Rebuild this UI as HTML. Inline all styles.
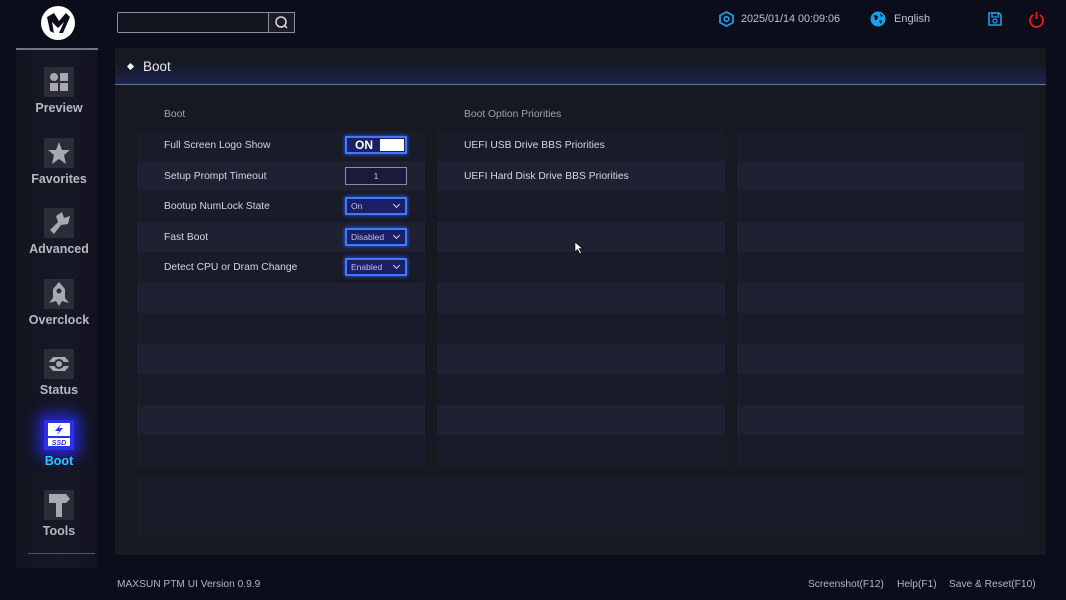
<!DOCTYPE html>
<html><head><meta charset="utf-8"><style>
*{margin:0;padding:0;box-sizing:border-box}
body{width:1066px;height:600px;background:#0b0d1b;font-family:"Liberation Sans",sans-serif;position:relative;overflow:hidden;color:#d0d2dc}
.abs{position:absolute}
.side{left:16px;top:48px;width:82px;height:520px;background:linear-gradient(90deg,#121420,#161825 60%,#12131f)}
.nav{position:absolute;left:16px;width:86px;text-align:center;font-weight:bold;font-size:12.5px;color:#b8b9c0}
.ico{position:absolute;left:44px;width:30px;height:30px;background:#2a2c38}
.main{left:115px;top:48px;width:931px;height:507px;background:#161822}
.hdr{left:115px;top:48px;width:931px;height:37px;background:linear-gradient(180deg,#161822 40%,#1d2550);border-bottom:1px solid #6a7090}
.col{position:absolute;top:130px;width:288px}
.r{height:30.5px;background:#1a1b29;font-size:10.3px;color:#d4d6de;line-height:31px;padding-left:27px;position:relative}
.r.l{background:#1f2132}
.ctl{position:absolute;left:208px;top:6px;width:62px;height:18px;border:2px solid #3a7cff;background:#1c1f66;box-shadow:0 0 4px #2f5fff;font-size:8.5px;color:#bfc4ea;line-height:14px;padding-left:4px}
.ctl i{position:absolute;right:6px;top:3px;width:5px;height:5px;border-right:1.5px solid #ddd;border-bottom:1.5px solid #ddd;transform:rotate(45deg)}
.ft{font-size:10.2px;color:#b4b6c0;top:579px}
</style></head><body>
<svg class="abs" style="left:40px;top:5px" width="36" height="36" viewBox="0 0 36 36"><circle cx="18" cy="18" r="17" fill="#fff"/><path d="M7 12 L14 8 L19 16 L26 8 L30 12 L23 28 L19 28 L24 17 L18 23 L12 17 L14 28 L10 26 Z" fill="#0b0d1b"/></svg>
<div class="abs side"></div>
<div class="abs" style="left:16px;top:48px;width:82px;height:1.5px;background:#707487"></div>
<div class="abs" style="left:28px;top:553px;width:67px;height:1px;background:#505468"></div>

<div class="ico" style="top:67px"><svg width="30" height="30"><circle cx="10" cy="10" r="4" fill="#a8a9b0"/><rect x="16" y="6" width="8" height="8" fill="#a8a9b0"/><rect x="6" y="16" width="8" height="8" fill="#a8a9b0"/><rect x="16" y="16" width="8" height="8" fill="#a8a9b0"/></svg></div>
<div class="nav" style="top:101px">Preview</div>
<div class="ico" style="top:138px"><svg width="30" height="30"><path d="M15 4 L18 12 L26 12 L20 17 L22 26 L15 21 L8 26 L10 17 L4 12 L12 12Z" fill="#a8a9b0"/></svg></div>
<div class="nav" style="top:172px">Favorites</div>
<div class="ico" style="top:208px"><svg width="30" height="30"><path d="M6 22 L14 14 L12 8 L18 4 L20 10 L26 8 L24 16 L17 17 L10 26Z" fill="#a8a9b0"/></svg></div>
<div class="nav" style="top:242px">Advanced</div>
<div class="ico" style="top:279px"><svg width="30" height="30"><path d="M15 3 L21 10 L21 19 L25 24 L18 22 L15 27 L12 22 L5 24 L9 19 L9 10Z" fill="#a8a9b0"/><circle cx="15" cy="12" r="2.5" fill="#2a2c38"/></svg></div>
<div class="nav" style="top:313px">Overclock</div>
<div class="ico" style="top:349px"><svg width="30" height="30"><path d="M3 15 L9 8 L21 8 L27 15 L21 22 L9 22Z" fill="#a8a9b0"/><rect x="3" y="13" width="24" height="4" fill="#2a2c38"/><circle cx="15" cy="15" r="5" fill="#2a2c38"/><circle cx="15" cy="15" r="3" fill="#a8a9b0"/></svg></div>
<div class="nav" style="top:383px">Status</div>
<div class="ico" style="top:420px;background:#2c30e8;box-shadow:0 0 14px 6px #2525d0"><svg width="30" height="30"><rect x="4" y="3" width="22" height="13" fill="#fff"/><path d="M17 4 L11 11 L15 11 L13 15 L19 8 L15 8Z" fill="#2c30e8"/><rect x="4" y="18" width="22" height="8" fill="#fff"/><text x="15" y="25" font-size="7" font-weight="bold" font-style="italic" text-anchor="middle" fill="#2c30e8" font-family="Liberation Sans">SSD</text></svg></div>
<div class="nav" style="top:454px;color:#27c9ff">Boot</div>
<div class="ico" style="top:490px"><svg width="30" height="30"><path d="M5 4 L22 4 L26 9 L22 13 L18 13 L18 27 L12 27 L12 13 L5 13Z" fill="#a8a9b0"/></svg></div>
<div class="nav" style="top:524px">Tools</div>

<div class="abs" style="left:117px;top:12px;width:178px;height:21px;border:1px solid #8a8d9a;border-radius:2px;background:#12141f"></div>
<div class="abs" style="left:268px;top:12px;width:27px;height:21px;border:1px solid #8a8d9a;background:#1a1c28"><svg width="25" height="19"><circle cx="12" cy="9" r="5" stroke="#ddd" stroke-width="1.5" fill="none"/><line x1="15.5" y1="12.5" x2="18" y2="15" stroke="#ddd" stroke-width="1.5"/></svg></div>

<svg class="abs" style="left:719px;top:11px" width="15" height="16"><path d="M7.5 1 L14 4.5 L14 11.5 L7.5 15 L1 11.5 L1 4.5Z" fill="none" stroke="#18a0e8" stroke-width="1.8"/><circle cx="7.5" cy="8" r="2.3" fill="none" stroke="#18a0e8" stroke-width="1.6"/></svg>
<div class="abs" style="left:741px;top:13px;font-size:10.8px;color:#c0c2cc">2025/01/14 00:09:06</div>
<svg class="abs" style="left:870px;top:11px" width="16" height="16"><circle cx="8" cy="8" r="7.5" fill="#18a0e8"/><path d="M4 4 L8 5 L7 9 L5 9Z M9 10 L12 9 L11 13Z M10 2 L13 5 L11 6Z" fill="#0b0d1b"/></svg>
<div class="abs" style="left:894px;top:13px;font-size:11px;color:#c0c2cc">English</div>
<svg class="abs" style="left:988px;top:12px" width="14" height="14"><path d="M1 1 L11 1 L13 3 L13 13 L1 13Z" fill="none" stroke="#18a0e8" stroke-width="1.6"/><rect x="4" y="1" width="6" height="4" fill="none" stroke="#18a0e8" stroke-width="1.3"/><circle cx="7" cy="9" r="2" fill="none" stroke="#18a0e8" stroke-width="1.3"/></svg>
<svg class="abs" style="left:1028px;top:11px" width="17" height="17"><path d="M5 4 A6.5 6.5 0 1 0 12 4" fill="none" stroke="#f01818" stroke-width="1.8"/><line x1="8.5" y1="1" x2="8.5" y2="8" stroke="#f01818" stroke-width="1.8"/></svg>

<div class="abs main"></div>
<div class="abs hdr"></div>
<div class="abs" style="left:128px;top:64px;width:5px;height:5px;background:#fff;transform:rotate(45deg)"></div>
<div class="abs" style="left:143px;top:59px;font-size:13.5px;color:#e8e9ee">Boot</div>

<div class="abs" style="left:164px;top:109px;font-size:10.3px;color:#a0a2ae">Boot</div>
<div class="abs" style="left:464px;top:109px;font-size:10.3px;color:#a0a2ae">Boot Option Priorities</div>

<div class="col" style="left:137px">
<div class="r">Full Screen Logo Show<div class="ctl" style="padding:0;background:#1c1f66"><span style="position:absolute;left:8px;top:0;font-size:12px;font-weight:bold;color:#fff;line-height:14px">ON</span><span style="position:absolute;right:1px;top:1px;width:24px;height:12px;background:#fff"></span></div></div>
<div class="r l">Setup Prompt Timeout<div class="ctl" style="border:1px solid #8a8ea8;background:#1a1b3c;box-shadow:none;text-align:center;padding:0;line-height:16px">1</div></div>
<div class="r">Bootup NumLock State<div class="ctl">On<i></i></div></div>
<div class="r l">Fast Boot<div class="ctl">Disabled<i></i></div></div>
<div class="r">Detect CPU or Dram Change<div class="ctl">Enabled<i></i></div></div>
<div class="r l"></div><div class="r"></div><div class="r l"></div><div class="r"></div><div class="r l"></div><div class="r"></div>
</div>
<div class="col" style="left:437px">
<div class="r">UEFI USB Drive BBS Priorities</div>
<div class="r l">UEFI Hard Disk Drive BBS Priorities</div>
<div class="r"></div><div class="r l"></div><div class="r"></div><div class="r l"></div><div class="r"></div><div class="r l"></div><div class="r"></div><div class="r l"></div><div class="r"></div>
</div>
<div class="col" style="left:737px;width:287px">
<div class="r"></div><div class="r l"></div><div class="r"></div><div class="r l"></div><div class="r"></div><div class="r l"></div><div class="r"></div><div class="r l"></div><div class="r"></div><div class="r l"></div><div class="r"></div>
</div>
<div class="abs" style="left:137px;top:477px;width:887px;height:60px;background:#1a1b29"></div>

<svg class="abs" style="left:574px;top:241px" width="10" height="14"><path d="M1 1 L1 11 L3.5 8.5 L6 13 L7.5 12 L5 7.5 L8.5 7.5Z" fill="#fff" stroke="#000" stroke-width=".6"/></svg>

<div class="abs ft" style="left:117px">MAXSUN PTM UI Version 0.9.9</div>
<div class="abs ft" style="left:808px">Screenshot(F12)</div>
<div class="abs ft" style="left:897px">Help(F1)</div>
<div class="abs ft" style="left:949px">Save &amp; Reset(F10)</div>
</body></html>
